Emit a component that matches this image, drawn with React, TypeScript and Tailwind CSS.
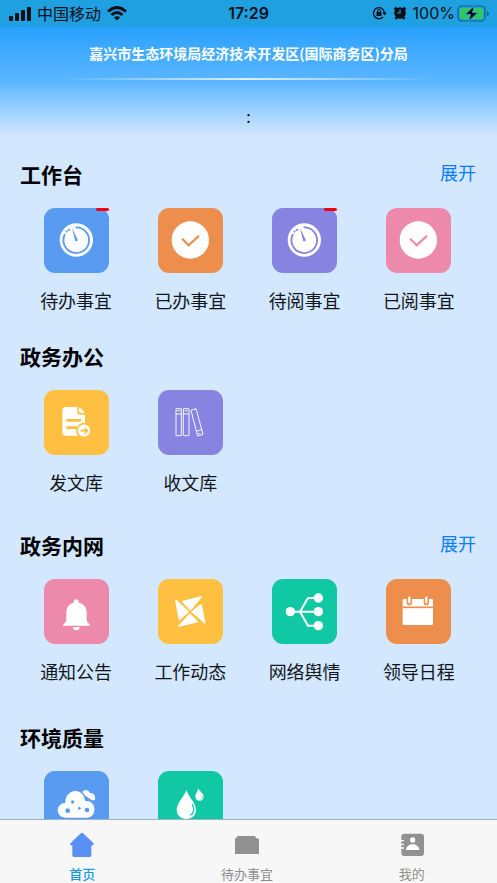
import type { ReactNode } from 'react';

type Tile = { label?: string; color: string; icon: ReactNode; badge?: boolean };
type SectionData = { title: string; expandable?: boolean; spacing: string; tiles: Tile[] };

const BLUE = 'bg-[#589bf0] text-[#589bf0]';
const ORANGE = 'bg-[#ed8e4c] text-[#ed8e4c]';
const PURPLE = 'bg-[#8784e1] text-[#8784e1]';
const PINK = 'bg-[#ed89ab] text-[#ed89ab]';
const YELLOW = 'bg-[#ffbf40] text-[#ffbf40]';
const GREEN = 'bg-[#10c8a3] text-[#10c8a3]';

function Glyph({ children }: { children: ReactNode }) {
  return (
    <svg viewBox="0 0 195 195" className="size-full" aria-hidden="true">
      {children}
    </svg>
  );
}

function TimerIcon() {
  return (
    <Glyph>
      <circle cx="97" cy="96" r="50" fill="white" />
      <g fill="none" stroke="currentColor" strokeWidth="5.5" strokeLinecap="round">
        <path d="M97 58A38.500 38.500 0 1 1 62 80" />
        <path d="M67 71l1-1M74 66l2-1" />
      </g>
      <path d="M84 60l17 35a4 4 0 1 1-8 2z" fill="currentColor" />
    </Glyph>
  );
}

function CheckIcon() {
  return (
    <Glyph>
      <circle cx="97" cy="96" r="56" fill="white" />
      <path d="M74 94l18 18 29-27" fill="none" stroke="currentColor" strokeWidth="6.5" strokeLinecap="round" />
    </Glyph>
  );
}

function SendDocIcon() {
  return (
    <Glyph>
      <path d="M66 51H100V66Q100 74 108 74H123V137H66Q55 137 55 126V62Q55 51 66 51Z" fill="white" />
      <path d="M105 53Q107 52 110 55L119 64Q122 67 121 69H110Q105 69 105 64Z" fill="white" />
      <path d="M70 91h38M70 113h26" stroke="currentColor" strokeWidth="8" strokeLinecap="round" />
      <circle cx="120" cy="122" r="21" fill="white" stroke="currentColor" strokeWidth="5" />
      <path d="M109 122h21M122 114l8 8-8 8" fill="none" stroke="currentColor" strokeWidth="5" />
    </Glyph>
  );
}

function BooksIcon() {
  return (
    <Glyph>
      <g fill="none" stroke="white" strokeWidth="2.800" strokeLinejoin="round">
        <rect x="54" y="56" width="16" height="81" rx="1" />
        <rect x="76" y="56" width="17" height="81" rx="1" />
        <path d="M54 72h16M76 72h17M58 62h8M80 62h9M99 61l15-5 21 77-16 5zM115 124l16-5M121 131l6-2" />
      </g>
    </Glyph>
  );
}

function BellIcon() {
  return (
    <Glyph>
      <path
        d="M97 61C101 61 104 64 105 71C118 73 128 85 128 100V123Q128 128 133 132Q137 136 137 140H57Q57 136 62 132Q67 128 67 123V100C67 85 77 73 89 71C90 64 93 61 97 61Z"
        fill="white"
      />
      <path d="M87 144h20c0 6-4 10-10 10s-10-4-10-10z" fill="white" />
    </Glyph>
  );
}

function PinwheelIcon() {
  return (
    <Glyph>
      <g fill="white" stroke="white" strokeWidth="5" strokeLinejoin="round">
        <path d="M75 68l54-14-32 37z" />
        <path d="M129 78l11 53-37-33z" />
        <path d="M63 141l54-13-21-22z" />
        <path d="M54 65l36 33-26 23z" />
      </g>
    </Glyph>
  );
}

function NetworkIcon() {
  return (
    <Glyph>
      <g fill="none" stroke="white" strokeWidth="6">
        <path d="M55 98h83M138 57h-30L84 98l24 42h30" />
      </g>
      <g fill="white">
        <circle cx="55" cy="98" r="14" />
        <circle cx="139" cy="57" r="14" />
        <circle cx="139" cy="98" r="14" />
        <circle cx="139" cy="140" r="14" />
      </g>
    </Glyph>
  );
}

function CalendarIcon() {
  return (
    <Glyph>
      <rect x="50" y="60" width="91" height="78" rx="4" fill="white" />
      <path d="M50 85h91" stroke="currentColor" strokeWidth="5" />
      <path d="M70 54v17M121 54v17" stroke="currentColor" strokeWidth="16" strokeLinecap="round" />
      <path d="M70 56v14M121 56v14" stroke="white" strokeWidth="7" strokeLinecap="round" />
    </Glyph>
  );
}

function CloudIcon() {
  return (
    <Glyph>
      <path d="M114 65C119 55 133 54 137 66C148 65 155 73 153 87C150 88 147 88 144 88L112 66Z" fill="white" />
      <path
        d="M66 142C31 142 30 97 62 94C62 50 120 44 125 88C162 86 162 142 130 142Z"
        fill="white"
        stroke="currentColor"
        strokeWidth="4"
      />
      <g fill="currentColor">
        <circle cx="71" cy="119" r="7" />
        <circle cx="86" cy="93" r="5" />
        <circle cx="106" cy="112" r="4" />
        <circle cx="129" cy="117" r="7" />
      </g>
    </Glyph>
  );
}

function DropsIcon() {
  return (
    <Glyph>
      <path d="M85 57C89 74 114 96 114 117C114 133 101 144 85 144C69 144 56 133 56 117C56 96 81 74 85 57Z" fill="white" />
      <path d="M103 101c8 14 4 26-5 31" fill="none" stroke="currentColor" strokeWidth="4" strokeLinecap="round" />
      <path d="M120 52C124 61 137 66 137 77C137 84 131 89 125 89C118 89 112 84 112 77C112 68 120 63 120 52Z" fill="white" />
      <path d="M132 73c3 6 0 10-4 12" fill="none" stroke="currentColor" strokeWidth="2" />
    </Glyph>
  );
}

const sections: SectionData[] = [
  {
    title: '工作台',
    expandable: true,
    spacing: 'mt-[21px]',
    tiles: [
      { label: '待办事宜', color: BLUE, icon: <TimerIcon />, badge: true },
      { label: '已办事宜', color: ORANGE, icon: <CheckIcon /> },
      { label: '待阅事宜', color: PURPLE, icon: <TimerIcon />, badge: true },
      { label: '已阅事宜', color: PINK, icon: <CheckIcon /> },
    ],
  },
  {
    title: '政务办公',
    spacing: 'mt-[26px]',
    tiles: [
      { label: '发文库', color: YELLOW, icon: <SendDocIcon /> },
      { label: '收文库', color: PURPLE, icon: <BooksIcon /> },
    ],
  },
  {
    title: '政务内网',
    expandable: true,
    spacing: 'mt-[33px]',
    tiles: [
      { label: '通知公告', color: PINK, icon: <BellIcon /> },
      { label: '工作动态', color: YELLOW, icon: <PinwheelIcon /> },
      { label: '网络舆情', color: GREEN, icon: <NetworkIcon /> },
      { label: '领导日程', color: ORANGE, icon: <CalendarIcon /> },
    ],
  },
  {
    title: '环境质量',
    spacing: 'mt-9',
    tiles: [
      { color: BLUE, icon: <CloudIcon /> },
      { color: GREEN, icon: <DropsIcon /> },
    ],
  },
];

function StatusBar() {
  return (
    <div className="flex h-[27px] shrink-0 items-center bg-[#1fa0e1] px-2 pb-px text-base leading-6 text-[#0a1016]">
      <div className="flex flex-1 items-center gap-[6px]">
        <svg width="23" height="15" viewBox="0 0 23 15" aria-hidden="true" fill="currentColor">
          <rect x="1" y="10" width="4" height="5" rx="1" />
          <rect x="7" y="7" width="4" height="8" rx="1" />
          <rect x="13" y="4" width="4" height="11" rx="1" />
          <rect x="19" y="1" width="4" height="14" rx="1" />
        </svg>
        <span>中国移动</span>
        <svg width="20" height="15" viewBox="0 0 20 15" aria-hidden="true">
          <g fill="none" stroke="currentColor" strokeWidth="3">
            <path d="M1 5.500Q10-2.500 19 5.500" />
            <path d="M4.500 9Q10 4 15.500 9" />
          </g>
          <path d="M7 11.500Q10 9 13 11.500L10 14.500Z" fill="currentColor" />
        </svg>
      </div>
      <span className="font-['Inter','Noto_Sans_CJK_SC',sans-serif] font-semibold">17:29</span>
      <div className="flex flex-1 items-center justify-end">
        <svg width="15" height="14" viewBox="0 0 15 14" aria-hidden="true">
          <path d="M11 11A5.500 5.500 0 1 1 12.500 7" fill="none" stroke="currentColor" strokeWidth="1.300" />
          <path d="M10.300 6.500h4.400l-2.200 3z" fill="currentColor" />
          <rect x="4.500" y="6" width="5" height="4" rx="0.500" fill="currentColor" />
          <path d="M5.500 6.500V5a1.500 1.500 0 0 1 3 0v1.500" fill="none" stroke="currentColor" strokeWidth="1" />
        </svg>
        <svg width="14" height="14" viewBox="0 0 14 14" aria-hidden="true" className="ml-[6px]">
          <circle cx="7" cy="7" r="5.800" fill="currentColor" />
          <path d="M1.500 3.500l2-2M12.500 3.500l-2-2M2.500 13l1.500-2M11.500 13L10 11" stroke="currentColor" strokeWidth="2.400" />
          <path d="M7 3.500V7H4" fill="none" stroke="#1fa0e1" strokeWidth="1.200" />
        </svg>
        <span className="ml-[6px] font-['Inter','Noto_Sans_CJK_SC',sans-serif]">100%</span>
        <svg width="32" height="17" viewBox="0 0 32 17" aria-hidden="true" className="ml-[2px]">
          <rect x="1" y="1" width="27" height="15" rx="4" fill="none" stroke="#12608a" strokeWidth="1.200" />
          <rect x="3" y="3" width="23" height="11" rx="2" fill="#35c759" />
          <path d="M30 6v5q2-1 2-2.500T30 6z" fill="#12608a" />
          <path d="M17.500 0.500L8 9.500h5.500L11.500 16.500L21 7.500h-5.500z" fill="#05080a" stroke="#1fa0e1" strokeWidth="1" />
        </svg>
      </div>
    </div>
  );
}

function Section({ title, expandable, spacing, tiles }: SectionData) {
  return (
    <section className={spacing}>
      <div className="flex h-8 items-center justify-between">
        <h2 className="pl-px text-[21px] leading-8 font-bold text-black">{title}</h2>
        {expandable && (
          <button type="button" className="pb-1 text-lg leading-7 text-[#0a7cff]">
            展开
          </button>
        )}
      </div>
      <div className="mt-[18px] grid grid-cols-4">
        {tiles.map((tile, index) => (
          <button type="button" key={index} className="flex flex-col items-center">
            <span className={`relative block size-[65px] rounded-[11px] ${tile.color}`}>
              {tile.icon}
              {tile.badge && <span className="absolute top-0 right-0 h-[3px] w-[13px] rounded-xs bg-[#f5000c]" />}
            </span>
            {tile.label && (
              <span className="mt-[13px] text-lg leading-7 whitespace-nowrap text-[#11161c]">{tile.label}</span>
            )}
          </button>
        ))}
      </div>
    </section>
  );
}

function TabBar() {
  return (
    <nav className="grid h-16 shrink-0 grid-cols-3 border-t border-[#9fb3c8] bg-[#f7f7f7] pr-[3px] text-[13px] leading-5 text-[#8e8e8e]">
      <button type="button" className="flex flex-col items-center pt-3 text-[#159bdd]" aria-current="page">
        <svg width="26" height="26" viewBox="0 0 78 78" aria-hidden="true" fill="#5890f4">
          <path d="M34 5Q39 0 44 5L73 33Q77 39 71 40H67V70Q67 75 62 75H15Q10 75 10 70V40H6Q1 39 5 33Z" />
        </svg>
        <span className="mt-[6px] font-medium">首页</span>
      </button>
      <button type="button" className="flex flex-col items-center pt-3">
        <svg width="26" height="26" viewBox="0 0 26 26" aria-hidden="true" fill="#919191">
          <path d="M1 7Q1 6 2 6L4 4H21L22 6L25 7V22H1Z" />
        </svg>
        <span className="mt-[6px]">待办事宜</span>
      </button>
      <button type="button" className="flex flex-col items-center pt-3">
        <svg width="26" height="26" viewBox="0 0 78 78" aria-hidden="true">
          <rect x="7" y="5" width="68" height="67" rx="9" fill="#919191" />
          <path d="M5 26h10M5 37h10M5 48h10" stroke="white" strokeWidth="4" />
          <circle cx="41" cy="24" r="8" fill="white" />
          <path d="M21 54C22 31 60 31 61 54Z" fill="white" />
        </svg>
        <span className="mt-[6px]">我的</span>
      </button>
    </nav>
  );
}

export default function App() {
  return (
    <div className="flex h-screen flex-col overflow-hidden bg-[#d3e8ff] font-['Noto_Sans_CJK_SC',sans-serif]">
      <StatusBar />
      <main className="min-h-0 flex-1 overflow-hidden">
        <header className="flex h-[110px] flex-col items-center bg-linear-to-b from-[#27a1ff] via-[#5ab6ff] via-50% to-[#d3e8ff] pt-[15px]">
          <h1 className="text-sm leading-[22px] font-bold whitespace-nowrap text-white">
            嘉兴市生态环境局经济技术开发区(国际商务区)分局
          </h1>
          <div className="mt-[14px] h-[2px] w-3/4 bg-linear-to-r from-transparent via-white/80 to-transparent" />
          <p className="mt-6 text-base leading-6 text-black">:</p>
        </header>
        <div className="pr-[21px] pl-[19px]">
          {sections.map((section) => (
            <Section key={section.title} {...section} />
          ))}
        </div>
      </main>
      <TabBar />
    </div>
  );
}
